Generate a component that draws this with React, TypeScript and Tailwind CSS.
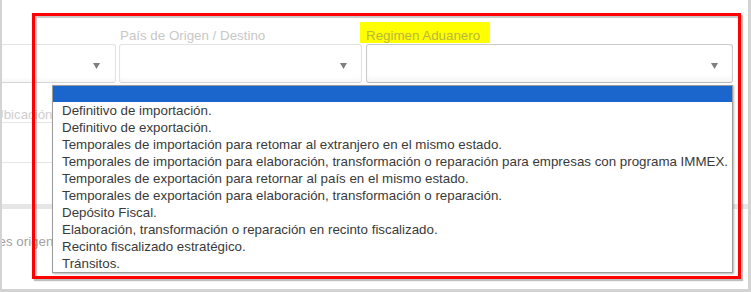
import React from "react";

const items = [
  "Definitivo de importación.",
  "Definitivo de exportación.",
  "Temporales de importación para retomar al extranjero en el mismo estado.",
  "Temporales de importación para elaboración, transformación o reparación para empresas con programa IMMEX.",
  "Temporales de exportación para retornar al país en el mismo estado.",
  "Temporales de exportación para elaboración, transformación o reparación.",
  "Depósito Fiscal.",
  "Elaboración, transformación o reparación en recinto fiscalizado.",
  "Recinto fiscalizado estratégico.",
  "Tránsitos.",
];

function Arrow() {
  return (
    <svg width="7" height="6" viewBox="0 0 7 6" className="mt-[4px]">
      <polygon points="0,0 7,0 3.5,6" fill="#7f7f7f" />
    </svg>
  );
}

export default function App() {
  return (
    <div className="relative w-[751px] h-[292px] overflow-hidden bg-white border-l-2 border-r-[3px] border-b-[3px] border-[#d3d3d3] font-['Liberation_Sans',Arial,sans-serif] text-[13.33px]">
      {/* form behind */}
      <div className="pt-[22px]">
        <div className="flex">
          <div className="w-[114px] flex flex-col">
            <div className="h-[22px]" />
            <div className="h-[39px] border border-l-0 border-[#e3e3e3] border-b-[#d6d6d6] rounded-r-[3px] flex items-center justify-end pr-[15px] shadow-[inset_0_-3px_3px_rgba(0,0,0,0.03)]">
              <Arrow />
            </div>
          </div>
          <div className="w-[243px] ml-[3px] flex flex-col">
            <div className="h-[22px] pt-[7px] pl-[1px] leading-[14px] text-[#c8c8c8] whitespace-nowrap">
              País de Origen / Destino
            </div>
            <div className="h-[39px] border border-[#e3e3e3] border-b-[#d6d6d6] rounded-[3px] flex items-center justify-end pr-[14px] shadow-[inset_0_-3px_3px_rgba(0,0,0,0.03)]">
              <Arrow />
            </div>
          </div>
          <div className="w-[367px] ml-[4px] flex flex-col">
            <div className="h-[22px] flex">
              <span className="ml-[-6px] h-[21px] pt-[7px] pl-[6px] pr-[10px] leading-[14px] bg-[#ffff00] text-[#b9b93c] whitespace-nowrap">
                Regimen Aduanero
              </span>
            </div>
            <div className="h-[39px] border border-[#c9c9c9] border-b-[#b8b8b8] rounded-[3px] flex items-center justify-end pr-[14px] shadow-[inset_0_-4px_4px_rgba(0,0,0,0.04)]">
              <Arrow />
            </div>
          </div>
        </div>
        <div className="w-[200px]">
          <div className="mt-[24px] h-[15px] leading-[15px] ml-[-8px] text-[#cfcfcf] whitespace-nowrap">
            Ubicación
          </div>
          <div className="h-[41px] border-t border-b border-[#e6e6e6]" />
        </div>
        <div className="mt-[41px] h-[5px] bg-[#e6e6e6]" />
        <div className="mt-[25px] h-[15px] leading-[15px] ml-[-3.5px] text-[#a3a3a3] whitespace-nowrap">
          es origen
        </div>
      </div>

      {/* dropdown list */}
      <div className="absolute left-[50px] top-[85px] w-[681px] h-[188px] bg-white border border-[#9c9c9c] shadow-[1px_1px_2px_rgba(0,0,0,0.3)] flex flex-col">
        <div className="h-[16px] bg-[#1a66cc]" />
        {items.map((t) => (
          <div key={t} className="h-[17px] leading-[17px] pl-[9px] text-[#3a3a3a] whitespace-nowrap">
            {t}
          </div>
        ))}
      </div>

      {/* red annotation */}
      <div className="absolute left-[30px] top-[13px] w-[709px] h-[266px] border-[3px] border-[#ff0000] shadow-[2px_2px_1px_rgba(0,0,0,0.25),inset_2px_2px_1px_rgba(0,0,0,0.22)]" />
    </div>
  );
}
